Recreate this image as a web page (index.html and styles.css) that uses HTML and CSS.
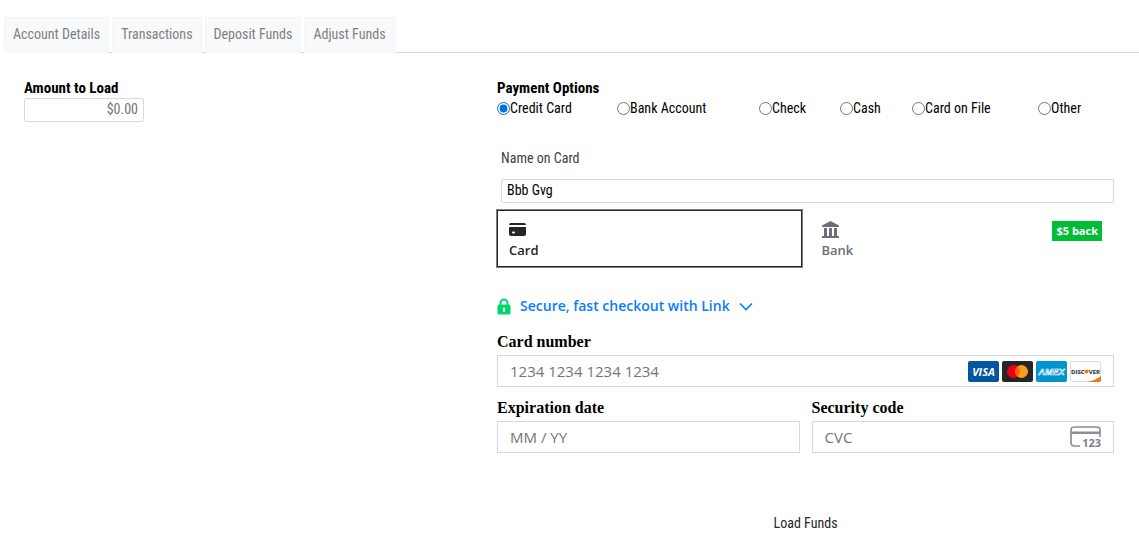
FILE: index.html
```html
<!DOCTYPE html>
<html lang="en">
<head>
  <meta charset="UTF-8">
  <meta name="viewport" content="width=device-width, initial-scale=1.0">
  <title>Deposit Funds</title>
  <link rel="stylesheet" href="styles.css">
</head>
<body>

  <nav class="tabs">
    <a class="tab" href="#details">Account Details</a>
    <a class="tab" href="#transactions">Transactions</a>
    <a class="tab" href="#deposit">Deposit Funds</a>
    <a class="tab" href="#adjust">Adjust Funds</a>
  </nav>

  <form class="deposit">
    <div class="amount">
      <label class="heading" for="amount">Amount to Load</label>
      <input class="field amount-input" type="text" id="amount" placeholder="$0.00">
    </div>

    <div class="payment">
      <fieldset class="options">
        <legend class="heading">Payment Options</legend>
        <div class="option-list">
          <label class="option"><input type="radio" name="method" checked>Credit Card</label>
          <label class="option"><input type="radio" name="method">Bank Account</label>
          <label class="option"><input type="radio" name="method">Check</label>
          <label class="option"><input type="radio" name="method">Cash</label>
          <label class="option"><input type="radio" name="method">Card on File</label>
          <label class="option"><input type="radio" name="method">Other</label>
        </div>
      </fieldset>

      <div class="name">
        <label class="name-label" for="name">Name on Card</label>
        <input class="field" type="text" id="name" value="Bbb Gvg">
      </div>

      <!-- Card / bank switch -->
      <div class="methods">
        <button type="button" class="method selected">
          <span class="method-info">
            <svg width="17" height="17" viewBox="0 0 17 17" fill="currentColor" aria-hidden="true">
              <path d="M2 2h13a2 2 0 0 1 2 2H0a2 2 0 0 1 2-2z"/>
              <path fill-rule="evenodd" d="M0 6h17v7a2 2 0 0 1-2 2H2a2 2 0 0 1-2-2zM4 10.500a1 1 0 0 0 0 2h1a1 1 0 0 0 0-2z"/>
            </svg>
            Card
          </span>
        </button>
        <button type="button" class="method">
          <span class="method-info">
            <svg width="17" height="17" viewBox="0 0 17 17" fill="currentColor" aria-hidden="true">
              <path d="M8.500 0L17 4.500V6H0V4.500zM2 7h3v8H2zM7 7h3v8H7zM12 7h3v8h-3zM0 15h17v2H0z"/>
            </svg>
            Bank
          </span>
          <span class="badge">$5 back</span>
        </button>
      </div>

      <button type="button" class="link-checkout">
        <svg width="14" height="17" viewBox="0 0 14 17" aria-hidden="true">
          <path d="M3.500 8V5a3.500 3.500 0 0 1 7 0v3" fill="none" stroke="#00d66f" stroke-width="2"/>
          <path fill="#00d66f" fill-rule="evenodd" d="M2 6.500h10a1.500 1.500 0 0 1 1.500 1.500v7a1.500 1.500 0 0 1-1.500 1.500H2A1.500 1.500 0 0 1 .5 15V8A1.500 1.500 0 0 1 2 6.500zM7 9.500a1.300 1.300 0 0 0-.8 2.300V14h1.600v-2.200A1.300 1.300 0 0 0 7 9.500z"/>
        </svg>
        <span>Secure, fast checkout with Link</span>
        <svg width="14" height="9" viewBox="0 0 14 9" aria-hidden="true">
          <path d="M1 1.500l6 6 6-6" fill="none" stroke="currentColor" stroke-width="1.600"/>
        </svg>
      </button>

      <div class="card-form">
        <div class="card-field wide">
          <label for="number">Card number</label>
          <div class="card-input">
            <input type="text" id="number" placeholder="1234 1234 1234 1234">
            <span class="brands">
              <svg width="31" height="21" viewBox="0 0 31 21" role="img" aria-label="Visa">
                <rect width="31" height="21" rx="2" fill="#00579f"/>
                <text class="visa" x="15.500" y="14.500" text-anchor="middle">VISA</text>
              </svg>
              <svg width="31" height="21" viewBox="0 0 31 21" role="img" aria-label="Mastercard">
                <rect width="31" height="21" rx="2" fill="#252525"/>
                <circle cx="11.500" cy="10.500" r="6.500" fill="#eb001b"/>
                <circle cx="19.500" cy="10.500" r="6.500" fill="#f79e1b"/>
                <path d="M15.500 5.400a6.500 6.500 0 0 1 0 10.200 6.500 6.500 0 0 1 0-10.200z" fill="#ff5f00"/>
              </svg>
              <svg width="31" height="21" viewBox="0 0 31 21" role="img" aria-label="American Express">
                <rect width="31" height="21" rx="2" fill="#0193ce"/>
                <text class="amex" x="15.500" y="13.500" text-anchor="middle">AMEX</text>
              </svg>
              <svg width="31" height="21" viewBox="0 0 31 21" role="img" aria-label="Discover">
                <rect x=".5" y=".5" width="30" height="20" rx="2" fill="#fff" stroke="#dcdde0"/>
                <path d="M31 15v4a2 2 0 0 1-2 2H17c6-1 10-3 14-6z" fill="#f27712"/>
                <text class="discover" x="1" y="12.500">DISC</text>
                <circle cx="16.500" cy="10.500" r="2" fill="#f27712"/>
                <text class="discover" x="30" y="12.500" text-anchor="end">VER</text>
              </svg>
            </span>
          </div>
        </div>
        <div class="card-field">
          <label for="expiry">Expiration date</label>
          <div class="card-input">
            <input type="text" id="expiry" placeholder="MM / YY">
          </div>
        </div>
        <div class="card-field">
          <label for="cvc">Security code</label>
          <div class="card-input">
            <input type="text" id="cvc" placeholder="CVC">
            <svg class="cvc-icon" width="31" height="22" viewBox="0 0 31 22" aria-hidden="true">
              <path d="M10 20H4a3 3 0 0 1-3-3V4a3 3 0 0 1 3-3h23a3 3 0 0 1 3 3v7" fill="none" stroke="#8d8d98" stroke-width="1.700"/>
              <path d="M1 5.500h29v2.500H1z" fill="#8d8d98"/>
              <text class="digits" x="31" y="21" text-anchor="end">123</text>
            </svg>
          </div>
        </div>
      </div>

      <button type="submit" class="load">Load Funds</button>
    </div>
  </form>

</body>
</html>
```
FILE: styles.css
```css
* {
  box-sizing: border-box;
}

body {
  margin: 0;
  font-family: "Roboto Condensed", "Liberation Sans Narrow", "Arial Narrow", sans-serif;
  font-size: 14px;
  line-height: 20px;
  color: #000;
  background-color: #fff;
}

button, input {
  font: inherit;
}

button {
  border: none;
  background: none;
  cursor: pointer;
}

input::placeholder {
  color: #757575;
  opacity: 1;
}

/* Tabs */
.tabs {
  display: flex;
  gap: 3px;
  margin-top: 17px;
  margin-left: 4px;
  box-shadow: inset 0 -1px #d5d9e0;
}

.tab {
  padding: 6px 8px 9px;
  border: 1px solid #f3f4f6;
  border-bottom: none;
  background-color: #f8f9fb;
  color: #808080;
  text-decoration: none;
}

/* Form */
.deposit {
  display: grid;
  grid-template-columns: 23fr 30fr;
  padding: 25px 25px 0 24px;
}

.amount {
  display: flex;
  flex-direction: column;
}

.heading {
  padding: 0;
  font-size: 15px;
  font-weight: bold;
}

.field {
  height: 24px;
  width: 100%;
  padding: 0 5px 2px;
  border: 1px solid #d5d9e0;
  border-radius: 2px;
}

.amount-input {
  width: 120px;
  text-align: right;
}

.options {
  margin: 0;
  padding: 0;
  border: none;
  min-width: 0;
}

.option-list {
  display: grid;
  grid-template-columns: 120fr 142fr 81fr 72fr 126fr 76fr;
}

.option {
  display: flex;
  align-items: center;
  white-space: nowrap;
}

.option input {
  width: 13px;
  height: 13px;
  margin: 0;
  accent-color: #0075d6;
}

.name {
  margin-top: 30px;
  padding-left: 4px;
}

.name-label {
  display: block;
  margin-bottom: 11px;
  color: #404040;
}

/* Card / bank switch */
.methods {
  display: grid;
  grid-template-columns: 1fr 1fr;
  gap: 8px;
  margin-top: 7px;
  font-family: "Open Sans", "Noto Sans", sans-serif;
  font-size: 13px;
  font-weight: 600;
}

.method {
  display: flex;
  justify-content: space-between;
  align-items: flex-start;
  padding: 11px 12px 7px;
  color: #6d6e78;
  text-align: left;
}

.method.selected {
  color: #262626;
  box-shadow: 0 0 0 1px #808080, inset 0 0 0 1px #262626;
}

.method-info {
  display: flex;
  flex-direction: column;
  gap: 2px;
}

.badge {
  padding: 0 4px;
  background-color: #00bd35;
  color: #fff;
  font-size: 11px;
  font-weight: bold;
}

.link-checkout {
  display: flex;
  align-items: center;
  gap: 9px;
  margin-top: 29px;
  padding: 0;
  color: #0a7cff;
  font-family: "Open Sans", "Noto Sans", sans-serif;
  font-size: 14px;
  font-weight: 600;
}

/* Card form */
.card-form {
  display: grid;
  grid-template-columns: 1fr 1fr;
  gap: 11px 12px;
  margin-top: 16px;
}

.wide {
  grid-column: 1 / -1;
}

.card-field label {
  display: block;
  margin-bottom: 3px;
  font-family: "Liberation Serif", serif;
  font-size: 16px;
  font-weight: bold;
}

.card-input {
  display: flex;
  align-items: center;
  height: 32px;
  padding: 0 12px;
  border: 1px solid #d5d9e0;
}

.card-input input {
  flex: 1;
  min-width: 0;
  padding: 0;
  border: none;
  outline: none;
  font-family: "Open Sans", "Noto Sans", sans-serif;
  font-size: 15px;
}

.brands {
  display: flex;
  gap: 3px;
}

.visa {
  fill: #fff;
  font: italic bold 11px "Open Sans", sans-serif;
}

.amex {
  fill: #0193ce;
  stroke: #fff;
  stroke-width: 0.6px;
  font: italic bold 9px "Liberation Sans", sans-serif;
}

.discover {
  fill: #1a1a1a;
  font: bold 6px "Open Sans", sans-serif;
}

.cvc-icon {
  overflow: visible;
}

.digits {
  fill: #7d7d88;
  font: bold 11px "Open Sans", sans-serif;
}

.load {
  display: block;
  margin: 60px auto 0;
  padding: 0;
  color: #262626;
}
```
